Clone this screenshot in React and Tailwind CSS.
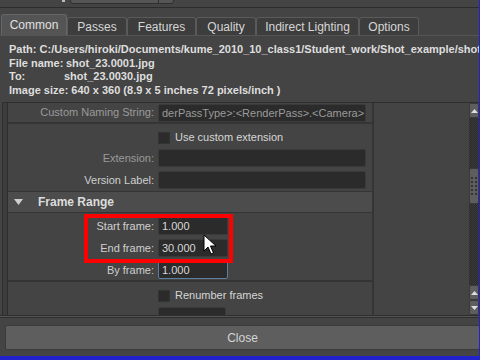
import React from "react";

const TABS = [
  { name: "Common", w: 66 },
  { name: "Passes", w: 60 },
  { name: "Features", w: 69 },
  { name: "Quality", w: 60 },
  { name: "Indirect Lighting", w: 103 },
  { name: "Options", w: 60 },
];

function Label({ children, dim }) {
  return (
    <div className={`w-[150px] shrink-0 text-right pr-[4px] ${dim ? "text-[#9a9a9a]" : "text-[#cfcfcf]"}`}>
      {children}
    </div>
  );
}

function Field({ w = "w-[208px]", children, focus }) {
  return (
    <div
      className={`${w} h-[18px] rounded-[2px] bg-[#2b2b2b] border ${
        focus ? "border-[#5d7ea0]" : "border-[#3a3a3a]"
      } px-[3px] leading-[16px] text-[#d8d8d8] overflow-hidden whitespace-nowrap`}
    >
      {children}
    </div>
  );
}

function Check({ label }) {
  return (
    <div className="h-[13px] flex items-center">
      <div className="w-[150px] shrink-0" />
      <div className="w-[12px] h-[12px] bg-[#2b2b2b] border border-[#333]" />
      <span className="ml-[5px] text-[#d6d6d6]">{label}</span>
    </div>
  );
}

function ScrollBtn({ up }) {
  return (
    <div className="h-[15px] bg-[#5e5e5e] border border-[#3a3a3a] rounded-[2px] flex items-center justify-center">
      <svg width="7" height="4" viewBox="0 0 7 4">
        {up ? <path d="M0 4 L3.5 0 L7 4 Z" fill="#ddd" /> : <path d="M0 0 L3.5 4 L7 0 Z" fill="#ddd" />}
      </svg>
    </div>
  );
}

export default function App() {
  return (
    <div
      className="w-[480px] h-[360px] bg-[#444444] relative overflow-hidden text-[11px] text-[#d0d0d0]"
      style={{ fontFamily: '"Liberation Sans", Arial, sans-serif' }}
    >
      {/* leftover bits of the window above */}
      <div className="h-[7px] relative">
        <div className="absolute left-[62px] top-0 w-[3px] h-[2px] bg-[#bbb]" />
        <div className="absolute left-[70px] top-[-4px] w-[104px] h-[8px] rounded-[3px] bg-[#555] border border-[#2f2f2f] flex">
          <div className="w-[88px] border-r border-[#2f2f2f]" />
        </div>
      </div>
      <div className="h-[1px] bg-[#2c2c2c]" />

      {/* tabs */}
      <div className="h-[28px] flex items-end pl-[1px] border-b border-[#555]">
        {TABS.map((t, i) => (
          <div
            key={t.name}
            style={{ width: t.w }}
            className={`shrink-0 flex items-center justify-center rounded-t-[3px] border border-b-0 text-[12px] ${
              i === 0
                ? "h-[21px] bg-[#545454] border-[#666] text-[#e0e0e0]"
                : "h-[18px] bg-[#3d3d3d] border-[#5a5a5a] text-[#d6d6d6]"
            }`}
          >
            {t.name}
          </div>
        ))}
      </div>

      {/* file info */}
      <div className="h-[66px] pl-[9px] pt-[7px] font-bold text-[#dedede] text-[11px] leading-[13.7px] whitespace-nowrap overflow-hidden">
        <div>Path: C:/Users/hiroki/Documents/kume_2010_10_class1/Student_work/Shot_example/shot_23</div>
        <div className="flex">
          <span className="w-[57px]">File name:</span>
          <span>shot_23.0001.jpg</span>
        </div>
        <div className="flex">
          <span className="w-[55px]">To:</span>
          <span>shot_23.0030.jpg</span>
        </div>
        <div>Image size: 640 x 360 (8.9 x 5 inches 72 pixels/inch )</div>
      </div>

      {/* scroll panel */}
      <div className="ml-[2px] h-[213px] border-t border-l border-[#2e2e2e] flex">
        <div className="w-[5px] bg-[#3d3d3d] border-r border-[#2e2e2e]" />
        <div className="w-[366px] border-r-2 border-[#353535] flex flex-col overflow-hidden">
          <div className="h-[21px] shrink-0 flex items-center border-b-2 border-[#353535]">
            <Label dim>Custom Naming String:</Label>
            <Field>
              <span className="text-[#9a9a9a]">derPassType&gt;:&lt;RenderPass&gt;.&lt;Camera&gt;</span>
            </Field>
          </div>
          <div className="pt-[7px]">
            <Check label="Use custom extension" />
          </div>
          <div className="mt-[5px] flex items-center">
            <Label dim>Extension:</Label>
            <Field />
          </div>
          <div className="mt-[4px] flex items-center">
            <Label>Version Label:</Label>
            <Field />
          </div>
          <div className="mt-[2px] h-[22px] shrink-0 bg-[#4c4c4c] border-y border-[#353535] flex items-center">
            <svg width="9" height="6" viewBox="0 0 9 6" className="ml-[6px]">
              <path d="M0 0 H9 L4.5 6 Z" fill="#cfcfcf" />
            </svg>
            <span className="ml-[15px] font-bold text-[12px] text-[#dcdcdc]">Frame Range</span>
          </div>
          <div className="h-[69px] shrink-0 border-b-2 border-[#353535] relative">
            <div className="pt-[4px] flex flex-col gap-[4px]">
              <div className="flex items-center">
                <Label>Start frame:</Label>
                <Field w="w-[70px]">1.000</Field>
              </div>
              <div className="flex items-center">
                <Label>End frame:</Label>
                <Field w="w-[70px]">30.000</Field>
              </div>
              <div className="flex items-center">
                <Label>By frame:</Label>
                <Field w="w-[70px]" focus>1.000</Field>
              </div>
            </div>
            {/* highlight box */}
            <div className="absolute left-[76px] top-[1px] w-[149px] h-[49px] border-[4px] border-[#ff0000]" />
            {/* mouse cursor */}
            <svg className="absolute left-[195px] top-[21px]" width="14" height="22" viewBox="0 0 14 22">
              <path d="M1 1 L1 17 L5 13 L8 20 L10.5 19 L7.5 12 L13 12 Z" fill="#fff" stroke="#000" strokeWidth="1" />
            </svg>
          </div>
          <div className="pt-[7px]">
            <Check label="Renumber frames" />
          </div>
          <div className="mt-[5px] flex">
            <div className="w-[150px] shrink-0" />
            <Field w="w-[68px]" />
          </div>
        </div>
        <div className="flex-1" />
        {/* scrollbar */}
        <div className="w-[10px] flex flex-col mr-[1px]">
          <ScrollBtn up />
          <div className="flex-1 bg-[repeating-conic-gradient(#3a3a3a_0_25%,#2c2c2c_0_50%)] bg-[length:2px_2px] relative">
            <div className="absolute left-0 right-0 top-[50px] h-[36px] bg-[#5e5e5e] border border-[#3a3a3a] rounded-[2px] grid grid-cols-2 gap-x-[2px] gap-y-[2px] px-[1px] pt-[8px] content-start">
              {Array.from({ length: 10 }).map((_, i) => (
                <div key={i} className="w-[2px] h-[2px] bg-[#333]" />
              ))}
            </div>
          </div>
          <ScrollBtn up />
          <ScrollBtn />
        </div>
      </div>

      {/* bottom */}
      <div className="h-[1px] bg-[#2e2e2e]" />
      <div className="h-[1px] bg-[#555]" />
      <div className="h-[1px] bg-[#2e2e2e]" />
      <div className="pt-[7px] pl-[5px]">
        <div className="h-[25px] bg-[#5e5e5e] border border-[#3a3a3a] rounded-[2px] flex items-center justify-center text-[12px] text-[#d4d4d4]">
          Close
        </div>
      </div>
      <div className="absolute left-0 right-0 bottom-0 h-[4px] bg-[#2222cc]" />
      <div className="absolute top-0 bottom-0 right-0 w-[1px] bg-[#2222cc]" />
    </div>
  );
}
